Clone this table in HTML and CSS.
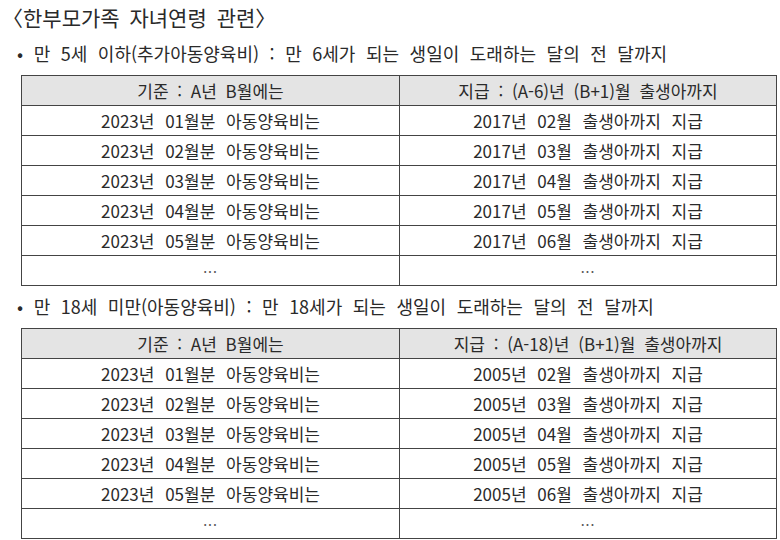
FILE: index.html
```html
<!DOCTYPE html>
<html lang="ko">
<head>
<meta charset="utf-8">
<link rel="stylesheet" href="styles.css">
</head>
<body>
<div class="page">
  <h1 class="title">〈한부모가족 자녀연령 관련〉</h1>
  <p class="bullet">• 만 5세 이하(추가아동양육비) : 만 6세가 되는 생일이 도래하는 달의 전 달까지</p>
  <table class="grid">
    <tr class="head"><td>기준 : A년 B월에는</td><td>지급 : (A-6)년 (B+1)월 출생아까지</td></tr>
    <tr><td>2023년 01월분 아동양육비는</td><td>2017년 02월 출생아까지 지급</td></tr>
    <tr><td>2023년 02월분 아동양육비는</td><td>2017년 03월 출생아까지 지급</td></tr>
    <tr><td>2023년 03월분 아동양육비는</td><td>2017년 04월 출생아까지 지급</td></tr>
    <tr><td>2023년 04월분 아동양육비는</td><td>2017년 05월 출생아까지 지급</td></tr>
    <tr><td>2023년 05월분 아동양육비는</td><td>2017년 06월 출생아까지 지급</td></tr>
    <tr><td class="dots">···</td><td class="dots">···</td></tr>
  </table>
  <p class="bullet">• 만 18세 미만(아동양육비) : 만 18세가 되는 생일이 도래하는 달의 전 달까지</p>
  <table class="grid">
    <tr class="head"><td>기준 : A년 B월에는</td><td>지급 : (A-18)년 (B+1)월 출생아까지</td></tr>
    <tr><td>2023년 01월분 아동양육비는</td><td>2005년 02월 출생아까지 지급</td></tr>
    <tr><td>2023년 02월분 아동양육비는</td><td>2005년 03월 출생아까지 지급</td></tr>
    <tr><td>2023년 03월분 아동양육비는</td><td>2005년 04월 출생아까지 지급</td></tr>
    <tr><td>2023년 04월분 아동양육비는</td><td>2005년 05월 출생아까지 지급</td></tr>
    <tr><td>2023년 05월분 아동양육비는</td><td>2005년 06월 출생아까지 지급</td></tr>
    <tr><td class="dots">···</td><td class="dots">···</td></tr>
  </table>
</div>
</body>
</html>
```
FILE: styles.css
```css
html, body {
  margin: 0;
  padding: 0;
  background: #ffffff;
}
.page {
  font-family: "Noto Sans CJK KR", "Noto Sans", sans-serif;
  color: #2a2a2a;
}
.title {
  margin: 0 0 0 2px;
  font-size: 21px;
  font-weight: normal;
  line-height: 33px;
  height: 33px;
  padding-top: 1px;
  box-sizing: border-box;
  word-spacing: 4px;
}
.bullet {
  margin: 0 0 0 17px;
  font-size: 18px;
  line-height: 24px;
  height: 42px;
  padding-top: 8px;
  box-sizing: border-box;
  word-spacing: 5.5px;
}
.grid {
  margin-left: 21px;
  width: 756px;
  border-collapse: collapse;
  table-layout: fixed;
  font-size: 17px;
}
.grid tr {
  height: 30px;
}
.grid td {
  border: 1.5px solid #444444;
  padding: 0;
  text-align: center;
  line-height: 20px;
  word-spacing: 6px;
}
.grid td:first-child {
  width: 377px;
}
.head td {
  background: #e4e4e4;
  word-spacing: 4px;
}
.dots {
  color: #555555;
  letter-spacing: 1px;
  font-size: 14px;
}
```
